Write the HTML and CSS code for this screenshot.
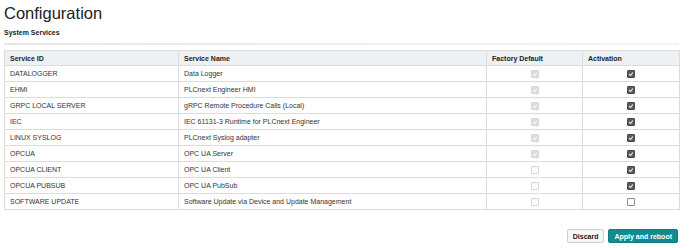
FILE: index.html
```html
<!DOCTYPE html>
<html lang="en">
<head>
    <meta charset="UTF-8">
    <meta name="viewport" content="width=device-width, initial-scale=1.0">
    <title>Configuration</title>
    <link rel="stylesheet" href="styles.css">
</head>
<body>
    <div class="page">
        <h1>Configuration</h1>
        <h2>System Services</h2>
        <div class="divider"></div>

        <table class="services">
            <thead>
                <tr>
                    <th class="col-id">Service ID</th>
                    <th class="col-name">Service Name</th>
                    <th class="col-default">Factory Default</th>
                    <th class="col-active">Activation</th>
                </tr>
            </thead>
            <tbody id="service-rows"></tbody>
        </table>

        <div class="actions">
            <button class="btn btn-discard">Discard</button>
            <button class="btn btn-apply">Apply and reboot</button>
        </div>
    </div>

    <script>
        const services = [
            ['DATALOGGER', 'Data Logger', true, true],
            ['EHMI', 'PLCnext Engineer HMI', true, true],
            ['GRPC LOCAL SERVER', 'gRPC Remote Procedure Calls (Local)', true, true],
            ['IEC', 'IEC 61131-3 Runtime for PLCnext Engineer', true, true],
            ['LINUX SYSLOG', 'PLCnext Syslog adapter', true, true],
            ['OPCUA', 'OPC UA Server', true, true],
            ['OPCUA CLIENT', 'OPC UA Client', false, true],
            ['OPCUA PUBSUB', 'OPC UA PubSub', false, true],
            ['SOFTWARE UPDATE', 'Software Update via Device and Update Management', false, false]
        ];

        const tick = '<svg viewBox="0 0 8 8"><path d="M1.5 4.3 L3.2 6 L6.5 2" fill="none" stroke-width="1.4"/></svg>';

        function box(checked, disabled) {
            let cls = 'check';
            if (disabled) cls += ' disabled';
            if (checked) cls += ' checked';
            return `<span class="${cls}">${checked ? tick : ''}</span>`;
        }

        const body = document.getElementById('service-rows');
        services.forEach(([id, name, factory, active]) => {
            const tr = document.createElement('tr');
            tr.innerHTML = `<td>${id}</td><td>${name}</td>` +
                `<td class="center">${box(factory, true)}</td>` +
                `<td class="center">${box(active, false)}</td>`;
            body.appendChild(tr);
        });
    </script>
</body>
</html>
```

FILE: styles.css
```css
body {
    font-family: 'Liberation Sans', Arial, sans-serif;
    margin: 0;
    padding: 0;
    background-color: #fff;
    color: #333;
}

.page {
    width: 675px;
    padding-left: 4px;
}

h1 {
    font-size: 16.5px;
    font-weight: normal;
    line-height: 20px;
    margin: 3px 0 0 0;
    color: #222;
}

h2 {
    font-size: 7px;
    font-weight: bold;
    line-height: 10px;
    margin: 5px 0 0 0;
    color: #222;
}

.divider {
    height: 2px;
    margin-top: 5px;
    background: linear-gradient(to right, #e6e6e6, #eeeeee 50%, #f3f3f3);
}

.services {
    width: 100%;
    margin-top: 5px;
    border-collapse: collapse;
    border: 1px solid #dcdcdc;
    font-size: 7px;
    table-layout: fixed;
}

.services th,
.services td {
    height: 16px;
    padding: 0 5px;
    border: 1px solid #dcdcdc;
    text-align: left;
    white-space: nowrap;
    box-sizing: border-box;
}

.services th {
    height: 15px;
    background-color: #eef1f3;
    font-weight: bold;
    color: #222;
}

.col-id { width: 174px; }
.col-name { width: 308px; }
.col-default { width: 96px; }
.col-active { width: 97px; }

.services td.center {
    text-align: center;
    padding: 0;
}

.check {
    display: inline-block;
    width: 8px;
    height: 8px;
    box-sizing: border-box;
    border: 1px solid #8a8a8a;
    border-radius: 1px;
    background: #fff;
    vertical-align: middle;
}

.check svg {
    display: block;
    width: 6px;
    height: 6px;
    stroke: #fff;
}

.check.checked {
    background: #5a5a5a;
    border-color: #4a4a4a;
}

.check.disabled {
    border-color: #d8d8d8;
    background: #fbfbfb;
}

.check.disabled.checked {
    background: #dedede;
    border-color: #d4d4d4;
}

.check.disabled svg {
    stroke: #f4f4f4;
}

.actions {
    display: flex;
    justify-content: flex-end;
    gap: 4px;
    margin-top: 19px;
    padding-right: 1px;
}

.btn {
    font-family: 'Liberation Sans', Arial, sans-serif;
    font-size: 7px;
    font-weight: bold;
    height: 14px;
    padding: 0 5px;
    border-radius: 2px;
    cursor: pointer;
}

.btn-discard {
    background-color: #f6f6f6;
    border: 1px solid #cfcfcf;
    color: #222;
}

.btn-apply {
    background-color: #148a91;
    border: 1px solid #0f7c83;
    color: #fff;
}
```
